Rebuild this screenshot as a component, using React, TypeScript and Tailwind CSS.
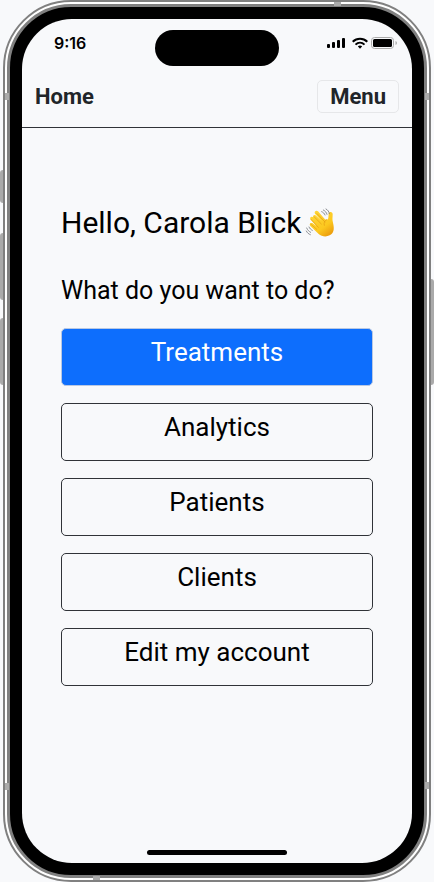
import React from "react";

const actions = [
  { label: "Treatments", primary: true },
  { label: "Analytics", primary: false },
  { label: "Patients", primary: false },
  { label: "Clients", primary: false },
  { label: "Edit my account", primary: false },
];

const hardware = [
  "left-0 top-[170px] h-[33px] w-[3px] rounded-l-sm",
  "left-0 top-[233px] h-[67px] w-[3px] rounded-l-sm",
  "left-0 top-[318px] h-[67px] w-[3px] rounded-l-sm",
  "right-0 top-[279px] h-[106px] w-[3px] rounded-r-sm",
  "left-[5px] top-[93px] h-[7px] w-1",
  "right-[5px] top-[93px] h-[7px] w-1",
  "left-[5px] bottom-[92px] h-[7px] w-1",
  "right-[5px] bottom-[93px] h-[7px] w-1",
  "right-[93px] top-[2px] h-1 w-[7px]",
  "left-[93px] bottom-[2px] h-1 w-[7px]",
];

function Wave() {
  return (
    <svg viewBox="0 0 96 96" className="h-8 w-8" role="img" aria-label="Waving hand">
      <defs>
        <linearGradient id="skin" x1="0" y1="0" x2="0.7" y2="1">
          <stop offset="0" stopColor="#ffd83d" />
          <stop offset="0.7" stopColor="#fcc81f" />
          <stop offset="1" stopColor="#eda00e" />
        </linearGradient>
      </defs>
      <path
        d="M24 27c3-4 7-4 10 0l16 15-20-22c-4-7 4-12 9-7l22 25 1-1c4 2 8 0 8-5l1-11c1-9 12-7 12 1 0 10-2 15 1 25 5 20 2 32-10 38-11 6-25 3-33-4L16 57c-5-6 1-12 7-8l12 9-18-20c-5-6 2-12 8-7l19 18-19-17c-1-1-1-3-1-5z"
        fill="url(#skin)"
      />
      <path
        d="M28 30l21 21M18 37l22 24M17 51l18 16M36 20l24 25M65 38c-7 4-9 9-7 17"
        fill="none"
        stroke="#e49a12"
        strokeWidth="2"
        strokeLinecap="round"
      />
      <path
        d="M55 9c6 3 9 7 11 13M63 6c6 3 9 8 10 14M50 14c5 2 8 5 10 10M5 63c3 7 7 10 12 13M4 72c3 6 7 9 12 11M12 60c2 5 6 8 10 10"
        fill="none"
        stroke="#777b80"
        strokeWidth="2.5"
        strokeLinecap="round"
      />
    </svg>
  );
}

function StatusIcons() {
  return (
    <svg viewBox="0 0 72 14" className="h-[14px] w-[72px]" aria-hidden="true">
      <rect x="0" y="8" width="3" height="4" rx="1" />
      <rect x="5" y="6" width="3" height="6" rx="1" />
      <rect x="10" y="4" width="3" height="8" rx="1" />
      <rect x="15" y="2" width="3" height="10" rx="1" />
      <g fill="none" stroke="#000" strokeWidth="2">
        <path d="M25.7 5.7c4.2-4 10.400-4 14.600 0" />
        <path d="M28.500 8.600c2.600-2.500 6.400-2.500 9 0" />
      </g>
      <path d="M30.800 10.300q2.200-1.700 4.400 0L33 12.700z" />
      <rect x="44.500" y="1.500" width="22" height="11" rx="3" fill="none" stroke="#aaa" />
      <rect x="46" y="3" width="19" height="8" rx="1.500" />
      <path d="M68.500 5v4q1.500-.5 1.500-2t-1.500-2z" fill="#aaa" />
    </svg>
  );
}

export default function App() {
  return (
    <div className="relative flex min-h-screen flex-col bg-[#f8f9fb] px-[3px] font-['Roboto',sans-serif] text-black">
      <div className="flex flex-1 flex-col rounded-[68px] border-2 border-[#808080] bg-white p-[2px]">
        <div className="flex flex-1 flex-col rounded-[64px] border-[3px] border-[#808080] bg-black p-3">
          <div className="flex flex-1 flex-col overflow-hidden rounded-[50px] bg-[#f8f9fb]">
            <div className="grid grid-cols-[1fr_124px_1fr] items-start pt-[11px] pr-[13px] pl-3">
              <span className="pt-px pl-5 font-['Inter',sans-serif] text-base leading-6 font-semibold">9:16</span>
              <div className="h-9 rounded-full bg-black" />
              <div className="flex justify-end pt-[6px]">
                <StatusIcons />
              </div>
            </div>
            <header className="flex items-center justify-between border-b border-[#303338] px-[13px] pt-[14px] pb-[14px] text-[#212529]">
              <a href="#home" className="text-[22px] leading-8 font-bold">Home</a>
              <button type="button" className="h-[33px] rounded-[5px] border border-[#e6e7e9] px-3 text-[22px] leading-[31px] font-bold">
                Menu
              </button>
            </header>
            <main className="flex flex-1 flex-col px-[39px] pt-[77px]">
              <h1 className="flex items-center gap-1 text-[30px] leading-9 whitespace-nowrap">
                Hello, Carola Blick <Wave />
              </h1>
              <h2 className="mt-[34px] text-[25px] leading-8 whitespace-nowrap">What do you want to do?</h2>
              <nav className="mt-[21px] flex flex-col gap-[17px]">
                {actions.map((a) => (
                  <button
                    key={a.label}
                    type="button"
                    className={`h-[58px] rounded-[5px] border pb-[10px] text-[26px] leading-8 ${
                      a.primary ? "border-[#b9c8e2] bg-[#0d6efd] text-white" : "border-[#303338]"
                    }`}
                  >
                    {a.label}
                  </button>
                ))}
              </nav>
            </main>
            <div className="mb-2 h-[5px] w-[140px] self-center rounded-full bg-black" />
          </div>
        </div>
      </div>
      {hardware.map((place) => (
        <span key={place} className={`absolute bg-[#aaaaaa] ${place}`} />
      ))}
    </div>
  );
}
